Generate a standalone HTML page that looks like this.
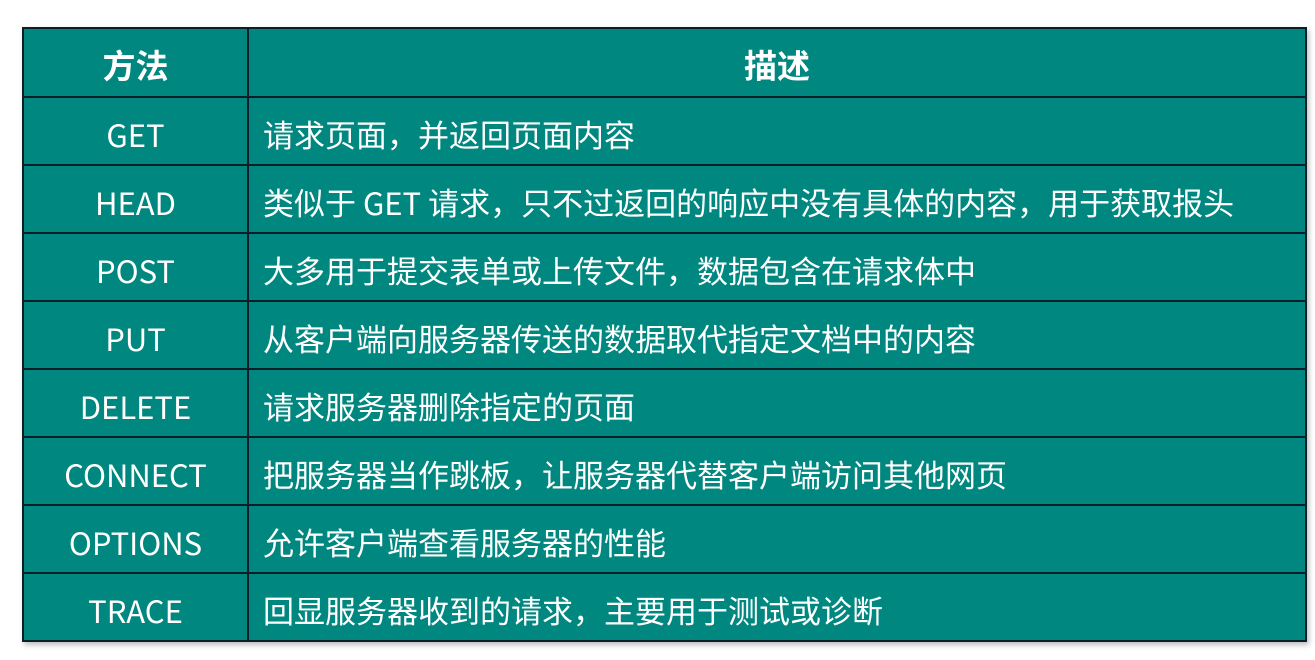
<!DOCTYPE html>
<html><head><meta charset="utf-8"><style>
html,body{margin:0;padding:0;background:#fff;width:1315px;height:660px;overflow:hidden}
table{position:absolute;left:22px;top:27px;width:1285px;border-collapse:collapse;background:#00877f;color:#fff;font-family:"Noto Sans CJK SC","Liberation Sans",sans-serif;box-shadow:2px 3px 5px rgba(0,0,0,0.25)}
td,th{border:2px solid #0c1e26;height:61px;padding:5px 0 0 0;font-size:31px;font-weight:normal;line-height:1}
th{font-weight:bold;font-size:33px;height:64px;padding-top:3px}
td:first-child,th{text-align:center}
td:nth-child(2){padding-left:14px;text-align:left}
</style></head><body>
<table>
<colgroup><col style="width:225px"><col></colgroup>
<tr><th>方法</th><th>描述</th></tr>
<tr><td>GET</td><td>请求页面，并返回页面内容</td></tr>
<tr><td>HEAD</td><td>类似于 GET 请求，只不过返回的响应中没有具体的内容，用于获取报头</td></tr>
<tr><td>POST</td><td>大多用于提交表单或上传文件，数据包含在请求体中</td></tr>
<tr><td>PUT</td><td>从客户端向服务器传送的数据取代指定文档中的内容</td></tr>
<tr><td>DELETE</td><td>请求服务器删除指定的页面</td></tr>
<tr><td>CONNECT</td><td>把服务器当作跳板，让服务器代替客户端访问其他网页</td></tr>
<tr><td>OPTIONS</td><td>允许客户端查看服务器的性能</td></tr>
<tr><td>TRACE</td><td>回显服务器收到的请求，主要用于测试或诊断</td></tr>
</table>
</body></html>
